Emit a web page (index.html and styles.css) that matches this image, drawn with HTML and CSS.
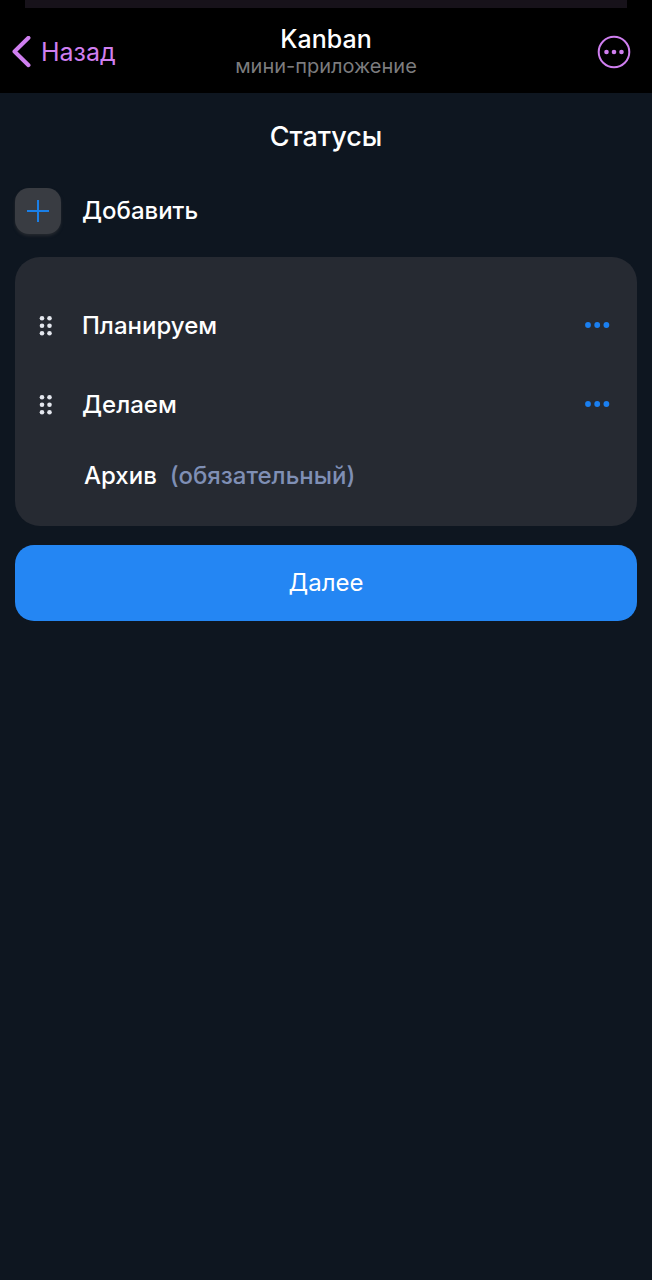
FILE: index.html
```html
<!DOCTYPE html>
<html lang="ru">
<head>
<meta charset="utf-8">
<meta name="viewport" content="width=device-width, initial-scale=1">
<title>Kanban</title>
<link rel="stylesheet" href="styles.css">
</head>
<body>
<div class="sheet-edge"></div>
<header class="topbar">
  <button class="back" type="button">
    <svg class="back-icon" width="20" height="32" viewBox="0 0 20 32" aria-hidden="true"><path d="M16.5 1.8 L2.5 15.5 L16.5 29.2" fill="none" stroke="currentColor" stroke-width="4" stroke-linecap="round" stroke-linejoin="round"/></svg>
    <span>Назад</span>
  </button>
  <div class="app">
    <span class="app-name">Kanban</span>
    <span class="app-kind">мини-приложение</span>
  </div>
  <button class="menu" type="button" aria-label="Меню">
    <svg width="34" height="34" viewBox="0 0 34 34" aria-hidden="true"><circle cx="17" cy="17" r="15.3" fill="none" stroke="currentColor" stroke-width="2"/><g fill="currentColor"><circle cx="9.5" cy="17" r="2.3"/><circle cx="17" cy="17" r="2.3"/><circle cx="24.5" cy="17" r="2.3"/></g></svg>
  </button>
</header>
<main class="content">
  <h1 class="title">Статусы</h1>
  <button class="add" type="button">
    <span class="add-icon"><svg width="24" height="24" viewBox="0 0 24 24" aria-hidden="true"><path d="M12 1V23M1 12H23" fill="none" stroke="currentColor" stroke-width="2"/></svg></span>
    <span>Добавить</span>
  </button>
  <ul class="statuses">
    <li class="status">
      <svg class="grip" width="14" height="20" viewBox="0 0 14 20" aria-hidden="true"><g fill="currentColor"><circle cx="3" cy="2.3" r="2.3"/><circle cx="10.5" cy="2.3" r="2.3"/><circle cx="3" cy="9.8" r="2.3"/><circle cx="10.5" cy="9.8" r="2.3"/><circle cx="3" cy="17.3" r="2.3"/><circle cx="10.5" cy="17.3" r="2.3"/></g></svg>
      <span class="status-name">Планируем</span>
      <button class="more" type="button" aria-label="Действия: Планируем"><svg width="26" height="8" viewBox="0 0 26 8" aria-hidden="true"><g fill="currentColor"><circle cx="4" cy="3" r="2.9"/><circle cx="13.2" cy="3" r="2.9"/><circle cx="22.4" cy="3" r="2.9"/></g></svg></button>
    </li>
    <li class="status">
      <svg class="grip" width="14" height="20" viewBox="0 0 14 20" aria-hidden="true"><g fill="currentColor"><circle cx="3" cy="2.3" r="2.3"/><circle cx="10.5" cy="2.3" r="2.3"/><circle cx="3" cy="9.8" r="2.3"/><circle cx="10.5" cy="9.8" r="2.3"/><circle cx="3" cy="17.3" r="2.3"/><circle cx="10.5" cy="17.3" r="2.3"/></g></svg>
      <span class="status-name">Делаем</span>
      <button class="more" type="button" aria-label="Действия: Делаем"><svg width="26" height="8" viewBox="0 0 26 8" aria-hidden="true"><g fill="currentColor"><circle cx="4" cy="3" r="2.9"/><circle cx="13.2" cy="3" r="2.9"/><circle cx="22.4" cy="3" r="2.9"/></g></svg></button>
    </li>
    <li class="status status-fixed"><span>Архив</span><span class="note">(обязательный)</span></li>
  </ul>
  <button class="next" type="button">Далее</button>
</main>
</body>
</html>
```
FILE: styles.css
```css
* {
  box-sizing: border-box;
}

body {
  margin: 0;
  min-height: 100vh;
  background: #0e1620;
  color: #fff;
  font-family: Inter, "Liberation Sans", sans-serif;
  font-size: 24px;
  line-height: 32px;
}

button {
  border: 0;
  padding: 0;
  background: none;
  color: inherit;
  font: inherit;
  cursor: pointer;
}

svg {
  display: block;
}

.sheet-edge {
  height: 8px;
  background: #17121a;
  border: solid #000;
  border-width: 0 25px;
}

.topbar {
  display: grid;
  grid-template-columns: 1fr auto 1fr;
  align-items: center;
  padding: 16px 12px 14px;
  background: #000;
}

.back,
.menu {
  color: #d07ff0;
}

.back {
  justify-self: start;
  display: flex;
  align-items: center;
  gap: 9px;
  font-size: 25px;
}

.menu {
  justify-self: end;
  margin-right: 9px;
}

.app {
  display: flex;
  flex-direction: column;
  align-items: center;
}

.app-name {
  font-size: 25px;
  font-weight: 500;
  line-height: 30px;
}

.app-kind {
  color: #7c7c7e;
  font-size: 20px;
  line-height: 25px;
}

.content {
  padding: 24px 15px;
}

.title {
  margin: 0 0 32px;
  font-size: 27px;
  font-weight: 500;
  line-height: 39px;
  text-align: center;
}

.add {
  display: flex;
  align-items: center;
  gap: 21px;
  font-weight: 500;
}

.add-icon {
  display: grid;
  place-items: center;
  width: 46px;
  height: 46px;
  border-radius: 14px;
  background: #393c42;
  box-shadow: 0 2px 3px #24282e;
  color: #1a7fe8;
}

.statuses {
  margin: 23px 0 19px;
  padding: 29px 27px 18px 24px;
  border-radius: 25px;
  background: #262a32;
  list-style: none;
  font-weight: 500;
}

.status {
  display: flex;
  align-items: center;
  height: 79px;
}

.grip {
  color: #e4e7ee;
}

.status-name {
  flex: 1;
  margin-left: 29px;
}

.more {
  color: #1a7ff0;
}

.status-fixed {
  height: 64px;
  padding-left: 45px;
  gap: 13px;
}

.note {
  color: #7f8fb5;
}

.next {
  display: block;
  width: 100%;
  height: 76px;
  border-radius: 19px;
  background: #2486f3;
}
```
